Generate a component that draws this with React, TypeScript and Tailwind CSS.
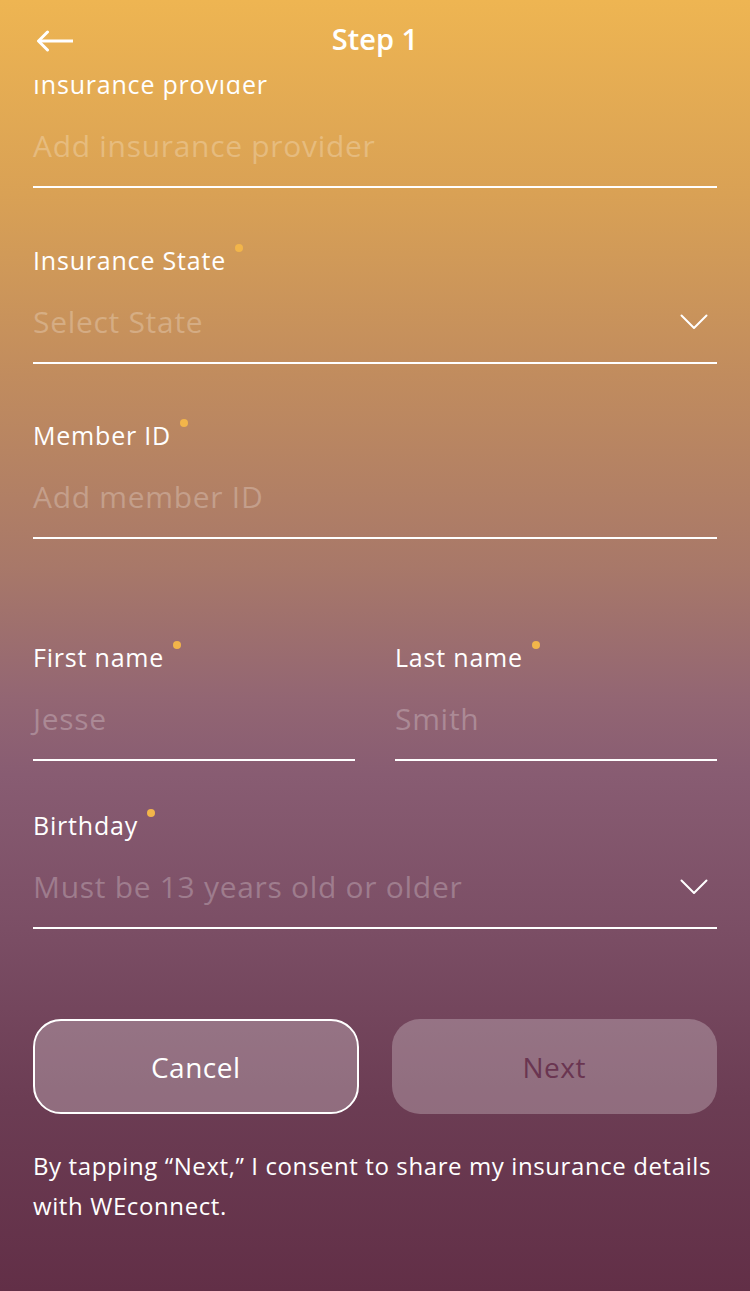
import React from "react";

function Chevron() {
  return (
    <svg width="28" height="16" viewBox="0 0 28 16" fill="none" className="shrink-0">
      <polyline points="1.5,1.5 14,14 26.5,1.5" stroke="white" strokeWidth="2" strokeLinecap="round" strokeLinejoin="round" />
    </svg>
  );
}

function Field({ label, placeholder, select, className = "" }: { label: string; placeholder: string; select?: boolean; className?: string }) {
  return (
    <div className={className}>
      <div className="flex items-start h-[30px]">
        <span className="text-[25px] leading-[30px] tracking-[0.8px] text-white">{label}</span>
        <span className="ml-[9px] -mt-[1px] w-[8px] h-[8px] rounded-full bg-[#F2B54A]" />
      </div>
      <div className="mt-[29px] flex items-center justify-between pb-[22px] border-b-2 border-white">
        <span className="text-[30px] leading-[36px] tracking-[0.7px] text-white/25 whitespace-nowrap">{placeholder}</span>
        {select && (
          <span className="mr-[9px]">
            <Chevron />
          </span>
        )}
      </div>
    </div>
  );
}

export default function App() {
  return (
    <div className="w-full h-[1291px] overflow-hidden flex flex-col font-['Open_Sans','Noto_Sans',sans-serif] bg-[linear-gradient(180deg,#EEB552_0%,#D9A155_15%,#C18C5E_29%,#A87869_44%,#936673_54%,#885C72_60%,#7B4E65_72%,#6C3D54_85%,#622F47_100%)]">
      <header className="h-[80px] shrink-0 grid grid-cols-[1fr_auto_1fr] items-center">
        <div className="pl-[36px] pt-[2px]">
          <svg width="38" height="22" viewBox="0 0 38 22" fill="none">
            <line x1="3" y1="11" x2="37" y2="11" stroke="white" strokeWidth="3" />
            <polyline points="11.5,2 2.5,11 11.5,20" stroke="white" strokeWidth="3" strokeLinecap="round" strokeLinejoin="round" />
          </svg>
        </div>
        <h1 className="-mt-[3px] text-[29px] font-semibold text-white leading-none">Step 1</h1>
        <div />
      </header>

      <div className="flex-1 overflow-hidden px-[33px] -mt-[11px] [clip-path:inset(11px_0_0_0)]">
        <Field label="Insurance provider" placeholder="Add insurance provider" />
        <Field className="mt-[57px]" label="Insurance State" placeholder="Select State" select />
        <Field className="mt-[56px]" label="Member ID" placeholder="Add member ID" />

        <div className="mt-[103px] grid grid-cols-2 gap-[40px]">
          <Field label="First name" placeholder="Jesse" />
          <Field label="Last name" placeholder="Smith" />
        </div>

        <Field className="mt-[49px]" label="Birthday" placeholder="Must be 13 years old or older" select />

        <div className="mt-[90px] grid grid-cols-2 gap-[33px]">
          <button className="h-[95px] rounded-[28px] border-2 border-white bg-white/25 text-white text-[28px] tracking-[0.5px]">Cancel</button>
          <button className="h-[95px] rounded-[28px] bg-white/25 text-[#6A3551] text-[28px] tracking-[0.5px]">Next</button>
        </div>

        <p className="mt-[32px] text-white text-[24px] leading-[40px] tracking-[0.6px]">
          By tapping “Next,” I consent to share my insurance details with WEconnect.
        </p>
      </div>
    </div>
  );
}
